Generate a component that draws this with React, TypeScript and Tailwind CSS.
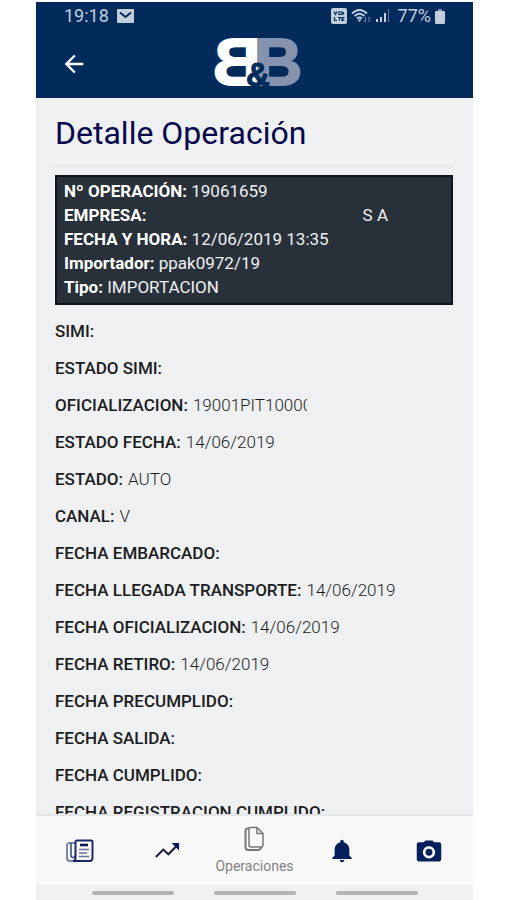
import React from 'react';
import { IoMdArrowBack, IoMdCamera, IoMdNotifications } from 'react-icons/io';

interface Field {
  label: string;
  value?: string;
  clipped?: boolean;
}

const FIELDS: Field[] = [
  { label: 'SIMI' },
  { label: 'ESTADO SIMI' },
  { label: 'OFICIALIZACION', value: '19001PIT10000', clipped: true },
  { label: 'ESTADO FECHA', value: '14/06/2019' },
  { label: 'ESTADO', value: 'AUTO' },
  { label: 'CANAL', value: 'V' },
  { label: 'FECHA EMBARCADO' },
  { label: 'FECHA LLEGADA TRANSPORTE', value: '14/06/2019' },
  { label: 'FECHA OFICIALIZACION', value: '14/06/2019' },
  { label: 'FECHA RETIRO', value: '14/06/2019' },
  { label: 'FECHA PRECUMPLIDO' },
  { label: 'FECHA SALIDA' },
  { label: 'FECHA CUMPLIDO' },
  { label: 'FECHA REGISTRACION CUMPLIDO' },
];

const StatusBar: React.FC = () => (
  <div className="flex h-7 items-center justify-between pl-7 pr-7 text-[18px] leading-7 text-[#c3cedd]">
    <div className="flex items-center gap-2">
      <span>19:18</span>
      <svg width="17" height="14" viewBox="0 0 17 14" aria-hidden="true">
        <rect width="17" height="14" rx="1" fill="#c3cedd" />
        <path d="M3 3.5l5.5 4.5L14 3.5" fill="none" stroke="#022b5c" strokeWidth="2" />
      </svg>
    </div>
    <div className="flex items-center gap-1">
      <svg width="16" height="16" viewBox="0 0 16 16" aria-hidden="true">
        <rect width="16" height="16" rx="2" fill="#c3cedd" />
        <path
          d="M3 3.5l1.5 3L6 3.5M8 4h3v2.5H8zM12.5 4v2.5M3.5 9v3.5H6M7 9.5h3M8.5 9.5v3M13.5 9.5H11v3h2.5M11 11h2"
          fill="none"
          stroke="#022b5c"
          strokeWidth="1.2"
        />
      </svg>
      <svg width="21" height="16" viewBox="0 0 21 16" aria-hidden="true">
        <g fill="none" stroke="#c3cedd" strokeWidth="1.8">
          <path d="M1 5.5Q8.500-1.500 16 5.500" />
          <path d="M3.500 8Q8.500 3.500 13.500 8" />
          <path d="M6 10.500Q8.500 8.500 11 10.500" />
        </g>
        <path d="M6.500 11.500h4L8.500 14z" fill="#c3cedd" />
        <path d="M14.500 9v5M13 12.500l1.500 1.500M18 14V9M19.500 10.500L18 9" stroke="#7388a6" fill="none" />
      </svg>
      <svg width="14" height="16" viewBox="0 0 14 16" aria-hidden="true">
        <path d="M0 11h2v3H0zM4 9h2v5H4zM8 5h2v9H8z" fill="#c3cedd" />
        <path d="M12 1h1v13h-1z" fill="#5f7696" />
      </svg>
      <span className="pl-1">77%</span>
      <svg width="10" height="15" viewBox="0 0 10 15" aria-hidden="true">
        <path d="M3 0h4v2h2q1 0 1 1v11q0 1-1 1H1q-1 0-1-1V3q0-1 1-1h2z" fill="#c3cedd" />
        <path d="M3 0h4v2H3z" fill="#7f92ae" />
      </svg>
    </div>
  </div>
);

// Two B's back to back, the left one mirrored, joined by an ampersand
const Logo: React.FC = () => (
  <svg
    width="84"
    height="52"
    viewBox="0 0 84 52"
    role="img"
    aria-label="B&B"
    className="overflow-visible"
    fontFamily="Liberation Sans, Arial, sans-serif"
    fontWeight="700"
  >
    <g strokeLinejoin="round" strokeWidth="2" fontSize="67">
      <text transform="translate(48 47) scale(-1 1)" fill="#ffffff" stroke="#ffffff">B</text>
      <text x="41" y="47" fill="#8593ae" stroke="#8593ae">B</text>
    </g>
    <text x="33" y="48" fontSize="33" fill="#022b5c" stroke="#022b5c">&amp;</text>
  </svg>
);

const NewspaperIcon: React.FC = () => (
  <svg width="28" height="24" viewBox="0 0 28 24" fill="none" aria-hidden="true">
    <path d="M9 4H3.500Q1 4 1 6.500V19q0 3 3 3h18" stroke="#7a86a8" strokeWidth="2" />
    <path d="M5 4v12.500q0 2 2 2t2-2" stroke="#35447a" strokeWidth="1.500" />
    <path d="M9.500 19V3q0-1.500 1.500-1.500h14q1.500 0 1.500 1.500v16q0 3-3 3H7q2.500 0 2.500-3z" stroke="#1b2a66" strokeWidth="2" />
    <path d="M14 6h8" stroke="#08184f" strokeWidth="2.500" />
    <path d="M13 10.500h10M13 14h8M13 17.500h10" stroke="#66739a" strokeWidth="1.500" />
  </svg>
);

const TrendIcon: React.FC = () => (
  <svg width="26" height="17" viewBox="0 0 28 18" aria-hidden="true">
    <path d="M2 16l8-8 5.500 5L24 4.500" fill="none" stroke="#1a1f3a" strokeWidth="2.200" />
    <path d="M19 1h8v8z" fill="#04105a" />
  </svg>
);

const DocumentsIcon: React.FC = () => (
  <svg width="22" height="26" viewBox="0 0 22 26" fill="none" stroke="#777777" strokeWidth="1.500" aria-hidden="true">
    <path d="M7 1.500h7l6 6V19q0 2-2 2H8q-2 0-2-2V2.500q0-1 1-1z" />
    <path d="M14 1.500v6h6" />
    <path d="M6 2.500H4.500Q2.500 2.500 2.500 5v16q0 3 3 3H15q2.500 0 3.500-3" strokeWidth="2" />
  </svg>
);

const App: React.FC = () => {
  return (
    <div className="flex h-screen flex-col bg-white pl-9 pr-[33px] font-['Roboto',sans-serif]">
      <header className="mt-0.5 shrink-0 bg-[#022b5c] pb-2">
        <StatusBar />
        <div className="grid grid-cols-[1fr_auto_1fr] items-center pt-2">
          <button type="button" aria-label="Volver" className="w-fit pl-6 text-white">
            <IoMdArrowBack size={28} />
          </button>
          <Logo />
        </div>
      </header>

      {/* Operation detail */}
      <main className="min-h-0 flex-1 overflow-hidden bg-[#eff0f2] pl-[19px] pr-5">
        <h1 className="border-b border-[#dddfe2] pb-3 pt-3.5 text-[32px] leading-[42px] text-[#05084a]">
          Detalle Operación
        </h1>

        <section className="mt-2 border-2 border-[#10151b] bg-[#283039] px-[7px] pb-1 pt-0.5 text-[17px] leading-6 text-[#eef0f2]">
          <p><b className="text-white">Nº OPERACIÓN:</b> 19061659</p>
          <p className="flex justify-between">
            <b className="text-white">EMPRESA:</b>
            <span className="pr-14">S A</span>
          </p>
          <p><b className="text-white">FECHA Y HORA:</b> 12/06/2019 13:35</p>
          <p><b className="text-white">Importador:</b> ppak0972/19</p>
          <p><b className="text-white">Tipo:</b> IMPORTACION</p>
        </section>

        <dl className="pt-2 text-[17px] leading-[37px] text-[#1b1d20]">
          {FIELDS.map(({ label, value, clipped }) => (
            <div key={label} className="flex gap-[5px] whitespace-nowrap">
              <dt className="font-medium">{label}:</dt>
              {value && (
                <dd className={clipped ? 'w-[114px] overflow-hidden font-light' : 'font-light'}>{value}</dd>
              )}
            </div>
          ))}
        </dl>
      </main>

      {/* Bottom tabs */}
      <nav className="grid h-[71px] shrink-0 grid-cols-5 border-t-2 border-[#e3e4e6] bg-[#f8f8f8] text-[#04205a]">
        <button type="button" aria-label="Noticias" className="flex items-center justify-center">
          <NewspaperIcon />
        </button>
        <button type="button" aria-label="Estadísticas" className="flex items-center justify-center">
          <TrendIcon />
        </button>
        <button type="button" className="flex flex-col items-center justify-center text-[14px] leading-5 text-[#828282]">
          <DocumentsIcon />
          <span className="pt-1">Operaciones</span>
        </button>
        <button type="button" aria-label="Notificaciones" className="flex items-center justify-center">
          <IoMdNotifications size={28} />
        </button>
        <button type="button" aria-label="Cámara" className="flex items-center justify-center">
          <IoMdCamera size={28} />
        </button>
      </nav>
      <div className="flex h-[15px] shrink-0 items-center justify-center gap-10 bg-[#f1f1f1]">
        <span className="h-1 w-[82px] rounded-full bg-[#b3b3b3]" />
        <span className="h-1 w-[82px] rounded-full bg-[#b3b3b3]" />
        <span className="h-1 w-[82px] rounded-full bg-[#b3b3b3]" />
      </div>
    </div>
  );
};

export default App;
